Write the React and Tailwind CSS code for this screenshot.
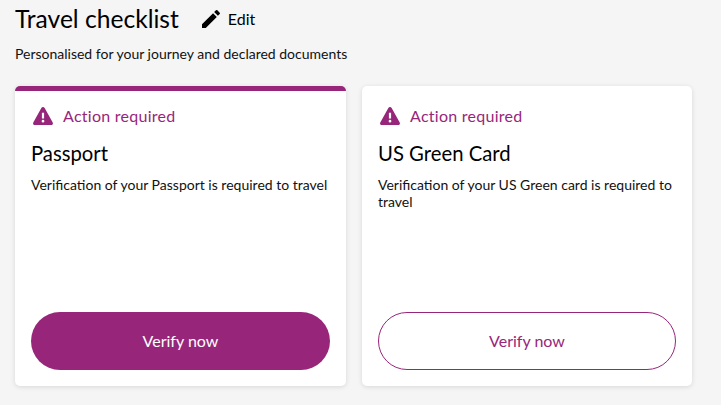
import React from 'react';

const WarningIcon = () => (
  <svg viewBox="0 0 24 24" className="w-[22px] h-[22px] shrink-0 text-[#97267a]" fill="currentColor">
    <path d="M12 2.2c-.8 0-1.4.4-1.8 1.1L1.4 19c-.8 1.4.2 2.9 1.8 2.9h17.6c1.6 0 2.6-1.5 1.8-2.9L13.8 3.3c-.4-.7-1-1.1-1.8-1.1zM10.8 8.5h2.4v6.2h-2.4V8.5zM12 16.1a1.5 1.5 0 1 1 0 3 1.5 1.5 0 0 1 0-3z" fillRule="evenodd" />
  </svg>
);

const PencilIcon = () => (
  <svg viewBox="0 0 24 24" className="w-[24px] h-[24px] text-black" fill="currentColor">
    <path d="M3 17.25V21h3.75L17.81 9.94l-3.75-3.75L3 17.25zM20.71 7.04a1 1 0 0 0 0-1.41l-2.34-2.34a1 1 0 0 0-1.41 0l-1.83 1.83 3.75 3.75 1.83-1.83z" />
  </svg>
);

function Card({ title, text, filled }) {
  return (
    <div className={`h-[300px] flex flex-col bg-white rounded-[5px] shadow-[0_1px_5px_rgba(0,0,0,0.12)] px-[16px] pb-[16px] ${filled ? 'w-[331px] border-t-[5px] border-[#97267a] pt-[14px]' : 'w-[330px] pt-[19px]'}`}>
      <div className="flex items-center gap-[9px] h-[22px] ml-[1px]">
        <WarningIcon />
        <span className="text-[16px] text-[#97267a] tracking-[0.27px]">Action required</span>
      </div>
      <h2 className="mt-[11px] text-[20.3px] leading-[30px] text-black">{title}</h2>
      <p className="mt-[8px] text-[14px] leading-[17px] text-[#111]">{text}</p>
      <button className={`mt-auto w-full h-[58px] rounded-[29px] text-[16px] ${filled ? 'bg-[#97267a] text-white' : 'bg-white text-[#97267a] border border-[#97267a]'}`}>
        Verify now
      </button>
    </div>
  );
}

export default function App() {
  return (
    <div className="w-[721px] h-[405px] overflow-hidden bg-[#f5f5f5] font-['Lato',sans-serif] px-[15px] pt-[2px]">
      <div className="flex items-center h-[34px]">
        <h1 className="text-[24.6px] leading-[34px] text-black">Travel checklist</h1>
        <div className="flex items-center gap-[5px] ml-[20px]">
          <PencilIcon />
          <span className="text-[16px] text-black">Edit</span>
        </div>
      </div>
      <p className="mt-[9px] text-[14px] leading-[18px] text-[#111]">Personalised for your journey and declared documents</p>
      <div className="flex gap-[16px] mt-[23px]">
        <Card filled title="Passport" text="Verification of your Passport is required to travel" />
        <Card title="US Green Card" text="Verification of your US Green card is required to travel" />
      </div>
    </div>
  );
}
